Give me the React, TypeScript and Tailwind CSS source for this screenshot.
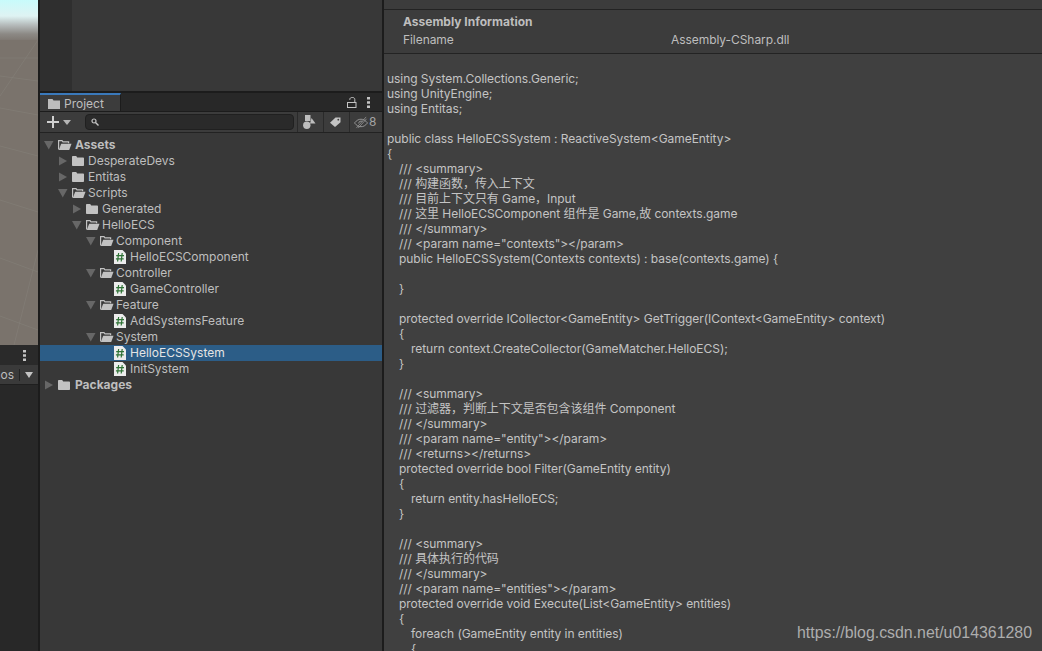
import React from "react";

type Node = { name: string; depth: number; kind: "open" | "closed" | "file"; bold?: boolean; selected?: boolean };

const tree: Node[] = [
  { name: "Assets", depth: 0, kind: "open", bold: true },
  { name: "DesperateDevs", depth: 1, kind: "closed" },
  { name: "Entitas", depth: 1, kind: "closed" },
  { name: "Scripts", depth: 1, kind: "open" },
  { name: "Generated", depth: 2, kind: "closed" },
  { name: "HelloECS", depth: 2, kind: "open" },
  { name: "Component", depth: 3, kind: "open" },
  { name: "HelloECSComponent", depth: 4, kind: "file" },
  { name: "Controller", depth: 3, kind: "open" },
  { name: "GameController", depth: 4, kind: "file" },
  { name: "Feature", depth: 3, kind: "open" },
  { name: "AddSystemsFeature", depth: 4, kind: "file" },
  { name: "System", depth: 3, kind: "open" },
  { name: "HelloECSSystem", depth: 4, kind: "file", selected: true },
  { name: "InitSystem", depth: 4, kind: "file" },
  { name: "Packages", depth: 0, kind: "closed", bold: true },
];

const code: [number, string][] = [
  [0, "using System.Collections.Generic;"],
  [0, "using UnityEngine;"],
  [0, "using Entitas;"],
  [0, ""],
  [0, "public class HelloECSSystem : ReactiveSystem<GameEntity>"],
  [0, "{"],
  [1, "/// <summary>"],
  [1, "/// 构建函数，传入上下文"],
  [1, "/// 目前上下文只有 Game，Input"],
  [1, "/// 这里 HelloECSComponent 组件是 Game,故 contexts.game"],
  [1, "/// </summary>"],
  [1, '/// <param name="contexts"></param>'],
  [1, "public HelloECSSystem(Contexts contexts) : base(contexts.game) {"],
  [0, ""],
  [1, "}"],
  [0, ""],
  [1, "protected override ICollector<GameEntity> GetTrigger(IContext<GameEntity> context)"],
  [1, "{"],
  [2, "return context.CreateCollector(GameMatcher.HelloECS);"],
  [1, "}"],
  [0, ""],
  [1, "/// <summary>"],
  [1, "/// 过滤器，判断上下文是否包含该组件 Component"],
  [1, "/// </summary>"],
  [1, '/// <param name="entity"></param>'],
  [1, "/// <returns></returns>"],
  [1, "protected override bool Filter(GameEntity entity)"],
  [1, "{"],
  [2, "return entity.hasHelloECS;"],
  [1, "}"],
  [0, ""],
  [1, "/// <summary>"],
  [1, "/// 具体执行的代码"],
  [1, "/// </summary>"],
  [1, '/// <param name="entities"></param>'],
  [1, "protected override void Execute(List<GameEntity> entities)"],
  [1, "{"],
  [2, "foreach (GameEntity entity in entities)"],
  [2, "{"],
];

function Arrow({ open }: { open: boolean }) {
  return (
    <svg width="10" height="10" viewBox="0 0 10 10" className="shrink-0">
      {open ? <path d="M0 1h9.500L4.750 9.500z" fill="#676767" /> : <path d="M1 .5l8 4.500-8 4.500z" fill="#676767" />}
    </svg>
  );
}

function FolderClosed() {
  return (
    <svg width="12" height="10" viewBox="0 0 12 10" className="shrink-0">
      <path d="M0 .8C0 .3.3 0 .8 0h3.400l1 1.400h6c.5 0 .8.3.8.8v7c0 .5-.3.8-.8.8H.8C.3 10 0 9.700 0 9.200z" fill="#c2c2c2" />
    </svg>
  );
}

function FolderOpen() {
  return (
    <svg width="14" height="10" viewBox="0 0 14 10" className="shrink-0">
      <path d="M.6 9.400V.6h3.400l1 1.300h5.600v1.400" fill="none" stroke="#c2c2c2" strokeWidth="1.200" />
      <path d="M.8 10l2.400-6.300h10.300L11.200 10z" fill="#c2c2c2" />
    </svg>
  );
}

function ScriptIcon() {
  return (
    <svg width="12" height="14" viewBox="0 0 12 14" className="shrink-0">
      <path d="M0 0h8.500L12 3.500V14H0z" fill="#ececec" />
      <path d="M4.600 3L3.600 11.500M8.200 3L7.200 11.500M2.200 5.600h7.800M1.900 8.900h7.800" stroke="#2f7336" strokeWidth="1.200" fill="none" />
    </svg>
  );
}

function TreeRow({ node }: { node: Node }) {
  const pad = 4 + node.depth * 14;
  let labelGap = "ml-1";
  if (node.kind === "open") labelGap = node.bold ? "ml-[3px]" : "ml-[2px]";
  if (node.kind === "closed" && node.bold) labelGap = "ml-[5px]";
  return (
    <div
      className={`flex h-4 items-center ${node.selected ? "bg-[#2c5d87] text-[#e4e4e4]" : "text-[#bebebe]"} ${node.bold ? "font-bold" : ""}`}
      style={{ paddingLeft: pad }}
    >
      <span className="flex w-[14px] shrink-0 items-center">
        {node.kind !== "file" && <Arrow open={node.kind === "open"} />}
      </span>
      {node.kind === "open" && <FolderOpen />}
      {node.kind === "closed" && <FolderClosed />}
      {node.kind === "file" && <ScriptIcon />}
      <span className={labelGap}>{node.name}</span>
    </div>
  );
}

function Kebab() {
  return (
    <svg width="3" height="11" viewBox="0 0 3 11" className="shrink-0">
      <path d="M0 0h3v2.500H0zM0 4.200h3v2.500H0zM0 8.400h3v2.500H0z" fill="#c4c4c4" />
    </svg>
  );
}

function SceneColumn() {
  return (
    <div className="flex h-full w-[38px] shrink-0 flex-col bg-[#282828]">
      <div className="h-[345px] shrink-0 overflow-hidden bg-[#7a736c]">
        <svg width="38" height="345" viewBox="0 0 38 345">
          <defs>
            <linearGradient id="sky" x1="0" y1="0" x2="0" y2="1">
              <stop offset="0" stopColor="#c8fbfb" />
              <stop offset="0.4" stopColor="#dff3f3" />
              <stop offset="0.62" stopColor="#b6bcbc" />
              <stop offset="0.85" stopColor="#8c8985" />
              <stop offset="1" stopColor="#7f7973" />
            </linearGradient>
          </defs>
          <rect width="38" height="40" fill="url(#sky)" />
          <path d="M0 96L38 40M0 58h38M0 76l38 5M0 108l38 7M0 146l38 10M0 200l38 12M0 258l38 14M0 316l38 14M14 345L38 250" stroke="#857f78" strokeWidth="0.600" fill="none" />
        </svg>
      </div>
      <div className="flex h-[20px] shrink-0 items-center justify-end bg-[#2a2a2a] pr-[12px]">
        <Kebab />
      </div>
      <div className="flex h-[20px] shrink-0 items-center justify-end overflow-hidden border-b border-[#1f1f1f] bg-[#3a3a3a] pr-[5px] text-[#bebebe]">
        <span className="shrink-0">Gizmos</span>
        <span className="mx-[5px] h-[12px] w-px shrink-0 bg-[#232323]" />
        <svg width="8" height="6" viewBox="0 0 8 6" className="shrink-0">
          <path d="M0 0h8L4 6z" fill="#c4c4c4" />
        </svg>
      </div>
    </div>
  );
}

function ProjectPanel() {
  return (
    <div className="flex h-full w-[342px] shrink-0 flex-col">
      {/* Inspector leftover up top */}
      <div className="flex h-[91px] shrink-0 bg-[#383838]">
        <div className="w-[32px] bg-[#2f2f2f]" />
      </div>
      <div className="h-[2px] shrink-0 bg-[#1c1c1c]" />

      {/* Tab bar */}
      <div className="flex h-[19px] shrink-0 items-stretch border-b border-[#1c1c1c] bg-[#282828]">
        <div className="flex w-[81px] items-center border-t-2 border-r border-t-[#3a79bb] border-r-[#1c1c1c] bg-[#3c3c3c] pl-2 pt-[2px] text-[#bebebe]">
          <svg width="12" height="10" viewBox="0 0 12 10" className="shrink-0">
            <path d="M0 0h4.500l1 1.500H12V10H0z" fill="#bdbdbd" />
          </svg>
          <span className="ml-[4px]">Project</span>
        </div>
        <div className="flex flex-1 items-center justify-end gap-[10px] pr-[12px]">
          <svg width="10" height="11" viewBox="0 0 10 11" className="shrink-0">
            <path d="M2.800 3V2.500C2.800 1 3.800.5 5.300.5S7.800 1 7.800 2.500V5" fill="none" stroke="#c4c4c4" />
            <rect x="0.500" y="5.500" width="8.500" height="5" fill="none" stroke="#c4c4c4" />
          </svg>
          <Kebab />
        </div>
      </div>

      {/* Toolbar */}
      <div className="flex h-[21px] shrink-0 items-center border-b border-[#222] bg-[#3c3c3c]">
        <svg width="12" height="12" viewBox="0 0 12 12" className="ml-[7px]">
          <path d="M5 0h2v5h5v2H7v5H5V7H0V5h5z" fill="#d0d0d0" />
        </svg>
        <svg width="8" height="5" viewBox="0 0 8 5" className="ml-[4px]">
          <path d="M0 0h8L4 5z" fill="#b5b5b5" />
        </svg>
        <div className="ml-[14px] flex h-[16px] w-[209px] items-center rounded-[4px] border border-[#202020] bg-[#2a2a2a] pl-[5px]">
          <svg width="8" height="8" viewBox="0 0 8 8">
            <circle cx="3" cy="3" r="2" fill="none" stroke="#c4c4c4" strokeWidth="1.200" />
            <path d="M4.500 4.500L7.500 7.500" stroke="#c4c4c4" strokeWidth="1.400" />
          </svg>
        </div>
        <div className="ml-[3px] flex h-full w-[26px] items-center justify-center border-l border-[#2a2a2a] pr-[2px]">
          <svg width="13" height="14" viewBox="0 0 13 14">
            <path d="M2 0h5.500v6H2z" fill="#bdbdbd" />
            <path d="M8.500 3l4 5.500H7z" fill="#bdbdbd" />
            <circle cx="3.800" cy="10.200" r="3.700" fill="#bdbdbd" />
          </svg>
        </div>
        <div className="flex h-full w-[26px] items-center justify-center border-l border-[#2a2a2a] pr-[3px]">
          <svg width="11" height="10" viewBox="0 0 11 10">
            <path d="M0 5.700L5.500.6h5v4.600L5 10z" fill="#c4c4c4" />
            <circle cx="8.300" cy="2.700" r="0.900" fill="#3c3c3c" />
          </svg>
        </div>
        <div className="flex h-full flex-1 items-center border-l border-[#2a2a2a] pl-[4px] text-[#a4a4a4]">
          <svg width="14" height="13" viewBox="0 0 15 13" className="shrink-0">
            <path d="M.5 7C3 4 5 3 7.500 3S12 4 14.500 7C12 10 10 11 7.500 11S3 10 .5 7z" fill="none" stroke="#9a9a9a" />
            <path d="M5 7.500a2.500 2.500 0 0 1 4-2" fill="none" stroke="#9a9a9a" />
            <path d="M2.500 12.500L13 .5M4.500 12.500L13.500 2.500" stroke="#9a9a9a" strokeWidth="0.800" />
          </svg>
          <span className="ml-px">8</span>
        </div>
      </div>

      {/* Tree */}
      <div className="min-h-0 flex-1 bg-[#383838] pt-1">
        {tree.map((node) => (
          <TreeRow key={node.name} node={node} />
        ))}
      </div>
    </div>
  );
}

function CodePanel() {
  return (
    <div className="relative flex h-full min-w-0 flex-1 flex-col overflow-hidden">
      <div className="h-[10px] shrink-0 border-b border-[#232323] bg-[#3c3c3c]" />
      <div className="flex h-[44px] shrink-0 flex-col gap-[3px] border-b border-[#232323] bg-[#3c3c3c] pl-[19px] pt-[3.500px] text-[#bebebe]">
        <div className="font-bold leading-[15px]">Assembly Information</div>
        <div className="flex leading-[15px] tracking-[-0.06px]">
          <span className="w-[268px]">Filename</span>
          <span>Assembly-CSharp.dll</span>
        </div>
      </div>
      <div className="min-h-0 flex-1 overflow-hidden bg-[#404040] pl-[3px] pt-[17px] tracking-[-0.05px] text-[#c4c4c4]">
        {code.map(([indent, text], i) => (
          <div key={i} className="h-[15px] whitespace-pre leading-[15px]" style={{ paddingLeft: indent * 12 }}>
            {text}
          </div>
        ))}
      </div>
      {/* csdn watermark */}
      <div className="absolute bottom-[9px] right-[10px] font-['Liberation_Sans',sans-serif] text-[15.900px] leading-[18px] text-[#adadad]">
        https://blog.csdn.net/u014361280
      </div>
    </div>
  );
}

export default function App() {
  return (
    <div className="flex h-[651px] w-[1042px] overflow-hidden bg-[#191919] font-['Inter','Noto_Sans_CJK_SC',sans-serif] text-[12px]">
      <SceneColumn />
      <div className="w-[2px] shrink-0 bg-[#1c1c1c]" />
      <ProjectPanel />
      <div className="w-[2px] shrink-0 bg-[#1c1c1c]" />
      <CodePanel />
    </div>
  );
}
